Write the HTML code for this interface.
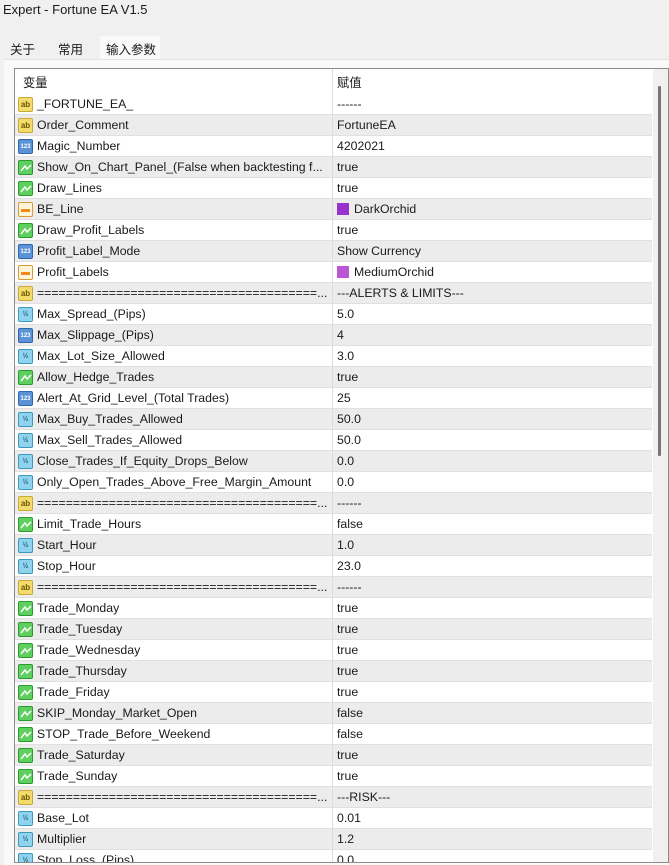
<!DOCTYPE html>
<html><head><meta charset="utf-8"><style>
*{margin:0;padding:0;box-sizing:border-box}
body{width:669px;height:865px;overflow:hidden;background:#f0f0f0;font-family:"Liberation Sans","Noto Sans CJK SC",sans-serif;font-size:12.3px;color:#1a1a1a;position:relative}
.title{position:absolute;left:3px;top:2px;font-size:13px}
.tab{position:absolute;top:36px;height:23px;font-size:12.5px;padding-top:3px}
.panel{position:absolute;left:4px;top:59px;width:665px;height:806px;background:#f9f9f9;border-top:1px solid #e3e3e3}
.box{position:absolute;left:14px;top:68px;width:655px;height:795px;border:1px solid #8c8c8c;background:#fff;overflow:hidden}
.hdr{position:absolute;left:0;top:0;width:637px;height:24px;background:#fff}
.hdr span{position:absolute;top:4px}
.row{position:absolute;left:0;width:637px;height:21px;border-bottom:1px solid #e0e0e0}
.g{background:#ececec}
.n{position:absolute;left:22px;top:3px;white-space:nowrap}
.v{position:absolute;left:322px;top:3px;white-space:nowrap}
.ic{position:absolute;left:3px;top:3px;width:15px;height:15px;border-radius:2px;font-size:8px;line-height:14px;text-align:center;font-weight:bold}
.ab{background:#f4dc6c;border:1px solid #c9a93a;color:#6a5200}
.n123{background:#5b93d6;border:1px solid #2f67ad;color:#fff;font-size:6px}
.bo{background:#5fcf5f;border:1px solid #2d9a2d}
.co{background:#fff3d8;border:1px solid #d89b3a}
.co::after{content:"";position:absolute;left:2px;top:6px;width:9px;height:3px;background:#f08a1a}
.dd{background:#8fd4ec;border:1px solid #3e98bd;color:#1d5e86;font-size:7px}
.div{position:absolute;left:317px;top:0;width:1px;height:795px;background:#dcdcdc}
.sb{position:absolute;left:638px;top:0;width:16px;height:795px;background:#f0f0f0;z-index:5}
.th{position:absolute;left:5px;top:17px;width:3px;height:370px;background:#777;border-radius:1px}
.sw{display:inline-block;width:12px;height:12px;vertical-align:-2px;margin-right:5px}
</style></head><body>
<div class="title">Expert - Fortune EA V1.5</div>
<div class="tab" style="left:10px">关于</div>
<div class="tab" style="left:58px">常用</div>
<div class="tab" style="left:100px;width:60px;background:#f9f9f9;padding-left:6px">输入参数</div>
<div class="panel"></div>
<div class="box">
<div class="hdr"><span style="left:8px">变量</span><span style="left:322px">赋值</span></div>
<div id="rows"></div>
<div class="div"></div>
<div class="sb"><div class="th"></div></div>
</div>
<script>
const E="=======================================...";
const R=[
["ab","_FORTUNE_EA_","------"],
["ab","Order_Comment","FortuneEA"],
["n123","Magic_Number","4202021"],
["bo","Show_On_Chart_Panel_(False when backtesting f...","true"],
["bo","Draw_Lines","true"],
["co","BE_Line","<span class='sw' style='background:#9932cc'></span>DarkOrchid"],
["bo","Draw_Profit_Labels","true"],
["n123","Profit_Label_Mode","Show Currency"],
["co","Profit_Labels","<span class='sw' style='background:#ba55d3'></span>MediumOrchid"],
["ab",E,"---ALERTS &amp; LIMITS---"],
["dd","Max_Spread_(Pips)","5.0"],
["n123","Max_Slippage_(Pips)","4"],
["dd","Max_Lot_Size_Allowed","3.0"],
["bo","Allow_Hedge_Trades","true"],
["n123","Alert_At_Grid_Level_(Total Trades)","25"],
["dd","Max_Buy_Trades_Allowed","50.0"],
["dd","Max_Sell_Trades_Allowed","50.0"],
["dd","Close_Trades_If_Equity_Drops_Below","0.0"],
["dd","Only_Open_Trades_Above_Free_Margin_Amount","0.0"],
["ab",E,"------"],
["bo","Limit_Trade_Hours","false"],
["dd","Start_Hour","1.0"],
["dd","Stop_Hour","23.0"],
["ab",E,"------"],
["bo","Trade_Monday","true"],
["bo","Trade_Tuesday","true"],
["bo","Trade_Wednesday","true"],
["bo","Trade_Thursday","true"],
["bo","Trade_Friday","true"],
["bo","SKIP_Monday_Market_Open","false"],
["bo","STOP_Trade_Before_Weekend","false"],
["bo","Trade_Saturday","true"],
["bo","Trade_Sunday","true"],
["ab",E,"---RISK---"],
["dd","Base_Lot","0.01"],
["dd","Multiplier","1.2"],
["dd","Stop_Loss_(Pips)","0.0"]];
const lab={ab:"ab",n123:"123",bo:"<svg width='13' height='13' style='display:block'><polyline points='2,10 6,5 8,8 12,4' fill='none' stroke='#fff' stroke-width='1.5'/></svg>",co:"",dd:"½"};
let h="";R.forEach((r,i)=>{h+=`<div class="row${i%2?' g':''}" style="top:${25+21*i}px"><div class="ic ${r[0]}">${lab[r[0]]}</div><div class="n">${r[1]}</div><div class="v">${r[2]}</div></div>`});
document.getElementById("rows").innerHTML=h;
</script>
</body></html>
